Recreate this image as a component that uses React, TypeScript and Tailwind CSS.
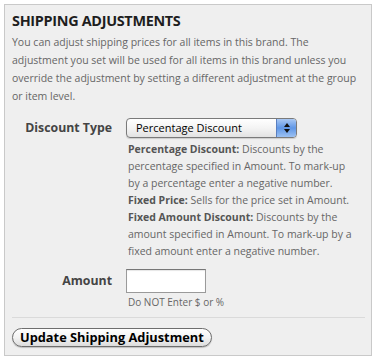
import React from "react";

const font = { fontFamily: "'Open Sans', 'DejaVu Sans', sans-serif" };

export default function App() {
  return (
    <div className="min-h-screen bg-white p-1 font-['Open_Sans',sans-serif]">
      <div className="w-[368px] h-[352px] border border-[#c9c9c9] bg-[#efefef] px-[7px] pt-[6px]">
        <h2 className="text-[14.4px] font-bold text-[#1e1e1e] leading-[20px] tracking-[-0.3px]">SHIPPING ADJUSTMENTS</h2>
        <p className="mt-[2px] text-[10.5px] leading-[18px] text-[#666]">
          You can adjust shipping prices for all items in this brand. The adjustment you set will be used for all items in this brand unless you override the adjustment by setting a different adjustment at the group or item level.
        </p>

        {/* Discount type row */}
        <div className="mt-[13px] flex">
          <div className="w-[100px] text-right text-[12.3px] font-bold text-[#444] leading-[20px]">Discount Type</div>
          <div className="ml-[14px] flex-1">
            <div className="flex h-[20px] w-[171px] items-stretch rounded-[4px] border border-[#7a7a7a] bg-gradient-to-b from-white via-[#f4f4f4] to-[#e2e2e2] shadow-[0_1px_1px_rgba(0,0,0,0.15)]">
              <span className="flex-1 pl-[9px] text-[11px] leading-[18px] text-black">Percentage Discount</span>
              <span className="flex w-[20px] flex-col items-center justify-center gap-[2px] rounded-r-[3px] border-l border-[#5a7fc0] bg-gradient-to-b from-[#a9c8f3] via-[#5f96e6] to-[#9cc1f2]">
                <span className="h-0 w-0 border-x-[3px] border-b-[4px] border-x-transparent border-b-[#111]" />
                <span className="h-0 w-0 border-x-[3px] border-t-[4px] border-x-transparent border-t-[#111]" />
              </span>
            </div>
            <div className="mt-[3px] pl-[2px] text-[10.5px] leading-[17px] text-[#666] w-[228px]">
              <b className="text-[#555]">Percentage Discount:</b> Discounts by the percentage specified in Amount. To mark-up by a percentage enter a negative number.
              <br />
              <b className="text-[#555]">Fixed Price:</b> Sells for the price set in Amount.
              <br />
              <b className="text-[#555]">Fixed Amount Discount:</b> Discounts by the amount specified in Amount. To mark-up by a fixed amount enter a negative number.
            </div>
          </div>
        </div>

        {/* Amount row */}
        <div className="mt-[9px] flex">
          <div className="w-[100px] text-right text-[12.3px] font-bold text-[#444] leading-[24px]">Amount</div>
          <div className="ml-[14px]">
            <div className="h-[24px] w-[80px] border border-[#9a9a9a] border-t-[#777] bg-white shadow-[inset_0_1px_1px_rgba(0,0,0,0.1)]" />
            <div className="mt-[2px] pl-[2px] text-[10px] leading-[14px] text-[#666]">Do NOT Enter $ or %</div>
          </div>
        </div>

        <div className="mt-[8px] h-px w-[353px] bg-[#dadada]" />

        <button
          style={font}
          className="mt-[10px] h-[19px] rounded-full border border-[#6e6e6e] bg-gradient-to-b from-white via-[#f3f3f3] to-[#dcdcdc] px-[7px] text-[12.8px] font-bold leading-[17px] text-black shadow-[0_1px_1px_rgba(0,0,0,0.2)]"
        >
          Update Shipping Adjustment
        </button>
      </div>
    </div>
  );
}
